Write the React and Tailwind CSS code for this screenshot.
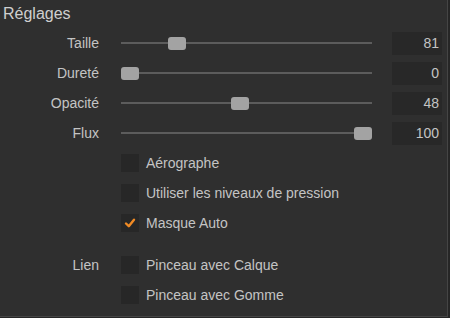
import React from "react";

const sliders = [
  { label: "Taille", value: 81, pos: 20 },
  { label: "Dureté", value: 0, pos: 0 },
  { label: "Opacité", value: 48, pos: 47.2 },
  { label: "Flux", value: 100, pos: 100 },
];

const Checkbox = ({ checked }) => (
  <div className="w-[18px] h-[18px] bg-[#272727] flex items-center justify-center">
    {checked && (
      <svg width="12" height="12" viewBox="0 0 12 12">
        <path
          d="M2 6.5 L4.8 9.2 L10 2.8"
          fill="none"
          stroke="#f08a24"
          strokeWidth="2.4"
          strokeLinecap="round"
          strokeLinejoin="round"
        />
      </svg>
    )}
  </div>
);

const SliderRow = ({ label, value, pos }) => (
  <div className="h-[30px] flex items-center">
    <div className="w-[99px] text-right">{label}</div>
    <div className="ml-[22px] w-[251px] h-[13px] relative flex items-center">
      <div className="w-full h-[2px] bg-[#5c5c5c]"></div>
      {/* THUMB */}
      <div
        className="absolute top-0 w-[18px] h-[13px] rounded-[3px] bg-[#a3a3a3]"
        style={{ left: `${(pos / 100) * 233}px` }}
      ></div>
    </div>
    <div className="ml-[20px] w-[50px] h-[23px] bg-[#282828] flex items-center justify-end pr-[3px]">
      {value}
    </div>
  </div>
);

const CheckRow = ({ label, text, checked }) => (
  <div className="h-[30px] flex items-center">
    <div className="w-[99px] text-right">{label}</div>
    <div className="ml-[22px]">
      <Checkbox checked={checked} />
    </div>
    <div className="ml-[7px]">{text}</div>
  </div>
);

export default function App() {
  return (
    <div className="w-[450px] h-[318px] bg-[#262626]">
      <div
        className="w-[448px] h-[317px] bg-[#2f2f2f] border-r border-b border-[#454545] text-[14px] text-[#c4c4c4]"
        style={{ fontFamily: '"Liberation Sans", Arial, sans-serif' }}
      >
        {/* HEADER */}
        <div className="h-[28px] pl-[3px] pt-[2px] text-[16px] text-[#cfcfcf]">
          Réglages
        </div>

        {sliders.map((s) => (
          <SliderRow key={s.label} {...s} />
        ))}

        <CheckRow text="Aérographe" />
        <CheckRow text="Utiliser les niveaux de pression" />
        <CheckRow text="Masque Auto" checked />
        <div className="h-[12px]"></div>
        <CheckRow label="Lien" text="Pinceau avec Calque" />
        <CheckRow text="Pinceau avec Gomme" />
      </div>
    </div>
  );
}
